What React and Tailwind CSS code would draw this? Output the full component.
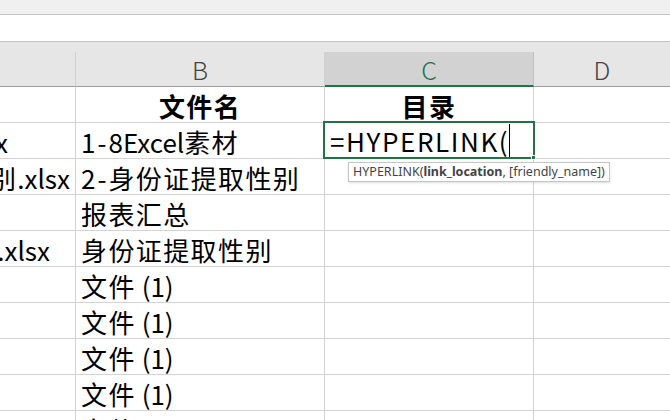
import React from 'react';

const font = { fontFamily: '"Segoe UI", "Noto Sans CJK SC", sans-serif' };

// widen CJK runs and hyphens a little, the sheet font sets them wider than Noto
const Txt = ({ children }) => {
  const parts = children.split(/([\u4e00-\u9fff]+|-)/).filter(Boolean);
  return (
    <span className="whitespace-pre">
      {parts.map((p, i) => {
        if (p === '-') return <span key={i} className="mx-[2px]">-</span>;
        if (/[\u4e00-\u9fff]/.test(p)) return <span key={i} className="tracking-[1.4px]">{p}</span>;
        return <span key={i}>{p}</span>;
      })}
    </span>
  );
};

const rows = [
  { a: 'x', aPad: 'pr-[67px]', b: '1-8Excel素材' },
  { a: '别.xlsx', aPad: 'pr-[5px]', b: '2-身份证提取性别' },
  { a: '', aPad: '', b: '报表汇总' },
  { a: '.xlsx', aPad: 'pr-[25px]', b: '身份证提取性别' },
  { a: '', aPad: '', b: '文件 (1)' },
  { a: '', aPad: '', b: '文件 (1)' },
  { a: '', aPad: '', b: '文件 (1)' },
  { a: '', aPad: '', b: '文件 (1)' },
  { a: '', aPad: '', b: '文件' },
];

const Row = ({ row, index }) => (
  <div className="flex h-[36px] shrink-0 border-b border-[#d4d4d4] text-[26px] leading-[32px] text-black">
    <div className={`w-[76px] shrink-0 border-r border-[#d4d4d4] flex items-center justify-end overflow-hidden whitespace-nowrap pt-[2px] ${row.aPad}`}>
      <Txt>{row.a}</Txt>
    </div>
    <div className="w-[249px] shrink-0 border-r border-[#d4d4d4] flex items-center pl-[5px] pt-[2px] overflow-hidden whitespace-nowrap">
      <Txt>{row.b}</Txt>
    </div>
    <div className="w-[209px] shrink-0 border-r border-[#d4d4d4] relative">
      {index === 0 && (
        <>
          <div className="absolute -left-[2px] -top-[2px] w-[212px] h-[38px] border-2 border-[#217346] z-10 flex items-center pl-[5px] pt-[2px] whitespace-nowrap">
            <span className="tracking-[1.6px]">=HYPERLINK(</span>
            <span className="inline-block w-[1px] h-[33px] bg-black -mt-[2px]"></span>
            <div className="absolute -right-[3px] -bottom-[3px] w-[5px] h-[5px] bg-[#217346] border border-white"></div>
          </div>
          <div
            className="absolute left-[23px] top-[39px] w-[262px] h-[20px] bg-white border border-[#c6c6c6] shadow-sm z-20 flex items-center pl-[4px] text-[12.5px] leading-[16px] text-[#444] whitespace-nowrap"
            style={{ fontFamily: '"Segoe UI", "Noto Sans", sans-serif' }}
          >
            HYPERLINK(<b className="font-bold">link_location</b>, [friendly_name])
          </div>
        </>
      )}
    </div>
    <div className="flex-1"></div>
  </div>
);

export default function App() {
  return (
    <div className="w-[670px] h-[420px] overflow-hidden bg-white flex flex-col" style={font}>
      <div className="h-[15px] shrink-0 bg-[#f0f0f0] border-b border-[#c6c6c6]"></div>
      <div className="h-[27px] shrink-0 bg-white border-b border-[#c6c6c6]"></div>
      <div className="h-[10px] shrink-0 bg-[#e6e6e6]"></div>
      <div className="flex h-[35px] shrink-0 bg-[#e6e6e6] text-[25px] leading-[32px] text-[#444] font-light">
        <div className="w-[76px] shrink-0 border-r border-[#d0d0d0] border-b border-b-[#9e9e9e]"></div>
        <div className="w-[249px] shrink-0 border-r border-[#d0d0d0] border-b border-b-[#9e9e9e] flex items-center justify-center">B</div>
        <div className="w-[209px] shrink-0 bg-[#d2d2d2] border-r border-[#c0c0c0] border-b-2 border-b-[#217346] flex items-center justify-center text-[#217346]">C</div>
        <div className="flex-1 border-b border-b-[#9e9e9e] flex items-center justify-center">D</div>
      </div>
      <div className="flex h-[36px] shrink-0 border-b border-[#d4d4d4] text-[26px] leading-[32px] tracking-[1.4px] font-bold text-black">
        <div className="w-[76px] shrink-0 border-r border-[#d4d4d4]"></div>
        <div className="w-[249px] shrink-0 border-r border-[#d4d4d4] flex items-center justify-center pt-[2px]">文件名</div>
        <div className="w-[209px] shrink-0 border-r border-[#d4d4d4] flex items-center justify-center pt-[2px]">目录</div>
        <div className="flex-1"></div>
      </div>
      {rows.map((row, i) => (
        <Row key={i} row={row} index={i} />
      ))}
    </div>
  );
}
